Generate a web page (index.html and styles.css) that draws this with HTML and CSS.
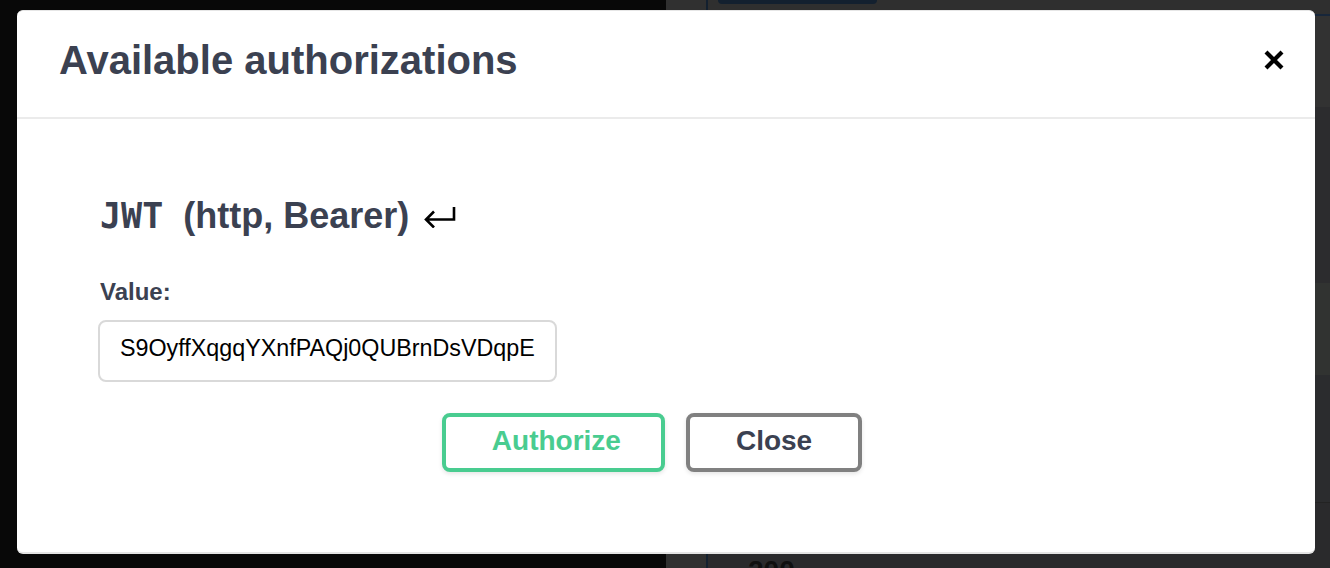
FILE: index.html
```html
<!DOCTYPE html>
<html>
<head>
<meta charset="utf-8">
<title>Available authorizations</title>
<link rel="stylesheet" href="styles.css">
</head>
<body>
<div class="page">
  <div class="side-dark"></div>
  <div class="side-strip"></div>
  <div class="side-line"></div>
  <div class="main">
    <div class="row row-top"><div class="top-btn"></div></div>
    <div class="row row-line"></div>
    <div class="row row-a"></div>
    <div class="row row-b"></div>
    <div class="row row-c"></div>
    <div class="row row-d"></div>
    <div class="row row-line2"></div>
    <div class="row row-e"><span class="code-200">200</span></div>
  </div>
</div>

<div class="modal" role="dialog">
  <div class="modal-header">
    <h3 class="modal-title">Available authorizations</h3>
    <button class="close-x" aria-label="Close">
      <svg width="20" height="20" viewBox="0 0 20 20"><path d="M2 2 L18 18 M18 2 L2 18" stroke="#000" stroke-width="4.2" fill="none"/></svg>
    </button>
  </div>
  <div class="modal-body">
    <h4 class="auth-title"><code class="scheme">JWT</code><span class="scheme-type">(http, Bearer)</span><svg class="enter-icon" width="32" height="22" viewBox="0 0 32 22"><path d="M30 1 V13.5 H2 M10 5.5 L2 13.5 L10 21.5" stroke="#000" stroke-width="2.6" fill="none"/></svg></h4>
    <label class="value-label" for="token">Value:</label>
    <input id="token" class="value-input" type="text" value="S9OyffXqgqYXnfPAQj0QUBrnDsVDqpE">
    <div class="btn-row">
      <button class="btn btn-authorize">Authorize</button>
      <button class="btn btn-close">Close</button>
    </div>
  </div>
</div>
</body>
</html>
```

FILE: styles.css
```css
html, body {
  margin: 0;
  padding: 0;
}
body {
  width: 1330px;
  height: 568px;
  overflow: hidden;
  position: relative;
  background: #2b2c2e;
  font-family: "Liberation Sans", Arial, sans-serif;
}
.page {
  display: flex;
  height: 568px;
}
.side-dark {
  width: 666px;
  background: #080808;
}
.side-strip {
  width: 40px;
  background: #303030;
}
.side-line {
  width: 2px;
  background: #13202f;
}
.main {
  flex: 1;
  display: flex;
  flex-direction: column;
}
.row-top {
  height: 14px;
  background: #2f2f2f;
  padding-left: 10px;
}
.top-btn {
  width: 159px;
  height: 4px;
  background: #13202f;
  border-radius: 0 0 5px 5px;
}
.row-line { height: 2px; background: #17263a; }
.row-a { height: 91px; background: #323232; }
.row-b { height: 176px; background: #2c2c2e; }
.row-c { height: 92px; background: #313331; }
.row-d { height: 127px; background: #2b2c2e; }
.row-line2 { height: 1px; background: #232323; }
.row-e {
  flex: 1;
  background: #2a2a2c;
  overflow: hidden;
}
.code-200 {
  display: block;
  margin: 52px 0 0 40px;
  font-size: 28px;
  line-height: 32px;
  font-weight: bold;
  color: #101010;
}

.modal {
  position: absolute;
  left: 17px;
  top: 10px;
  width: 1298px;
  height: 544px;
  box-sizing: border-box;
  background: #fff;
  border-top: 1px solid #e6e6e6;
  border-bottom: 2px solid #e4e4e4;
  border-radius: 6px;
  display: flex;
  flex-direction: column;
}
.modal-header {
  display: flex;
  align-items: center;
  justify-content: space-between;
  padding: 26px 31px 34px 42px;
  border-bottom: 2px solid #ebebeb;
}
.modal-title {
  margin: 0;
  font-size: 40px;
  line-height: 46px;
  font-weight: bold;
  color: #3b4151;
}
.close-x {
  border: 0;
  background: none;
  padding: 0;
  width: 20px;
  height: 20px;
  display: block;
  margin-top: -1px;
}
.close-x svg { display: block; }

.modal-body {
  padding: 77px 40px 0 83px;
  display: flex;
  flex-direction: column;
  align-items: flex-start;
}
.auth-title {
  margin: 0;
  display: flex;
  align-items: center;
  font-size: 36px;
  line-height: 40px;
  font-weight: bold;
  color: #3b4151;
}
.scheme {
  font-family: "DejaVu Sans Mono", "Liberation Mono", monospace;
  font-weight: bold;
  font-size: 35px;
  margin-right: 20px;
}
.enter-icon {
  margin-left: 15px;
  margin-top: 2px;
}
.value-label {
  margin-top: 42px;
  font-size: 24px;
  line-height: 28px;
  font-weight: bold;
  color: #3b4151;
}
.value-input {
  margin-top: 14px;
  margin-left: -2px;
  width: 459px;
  height: 62px;
  box-sizing: border-box;
  border: 2px solid #d9d9d9;
  border-radius: 8px;
  padding: 0 19px 5px 20px;
  font-family: "Liberation Sans", Arial, sans-serif;
  font-size: 23.3px;
  color: #000;
  background: #fff;
  outline: none;
}
.btn-row {
  align-self: stretch;
  margin-left: -83px;
  margin-right: -40px;
  margin-top: 31px;
  display: flex;
  justify-content: center;
  gap: 21px;
  padding-right: 28px;
}
.btn {
  font-family: "Liberation Sans", Arial, sans-serif;
  font-size: 28px;
  line-height: 32px;
  font-weight: bold;
  background: #fff;
  border: 4px solid #808080;
  border-radius: 8px;
  height: 59px;
  box-sizing: border-box;
  box-shadow: 0 2px 4px rgba(0, 0, 0, 0.1);
  padding: 8px 46px 11px;
  color: #3b4151;
}
.btn-authorize {
  border-color: #49cc90;
  color: #49cc90;
  padding-left: 46px;
  padding-right: 40px;
}
```
